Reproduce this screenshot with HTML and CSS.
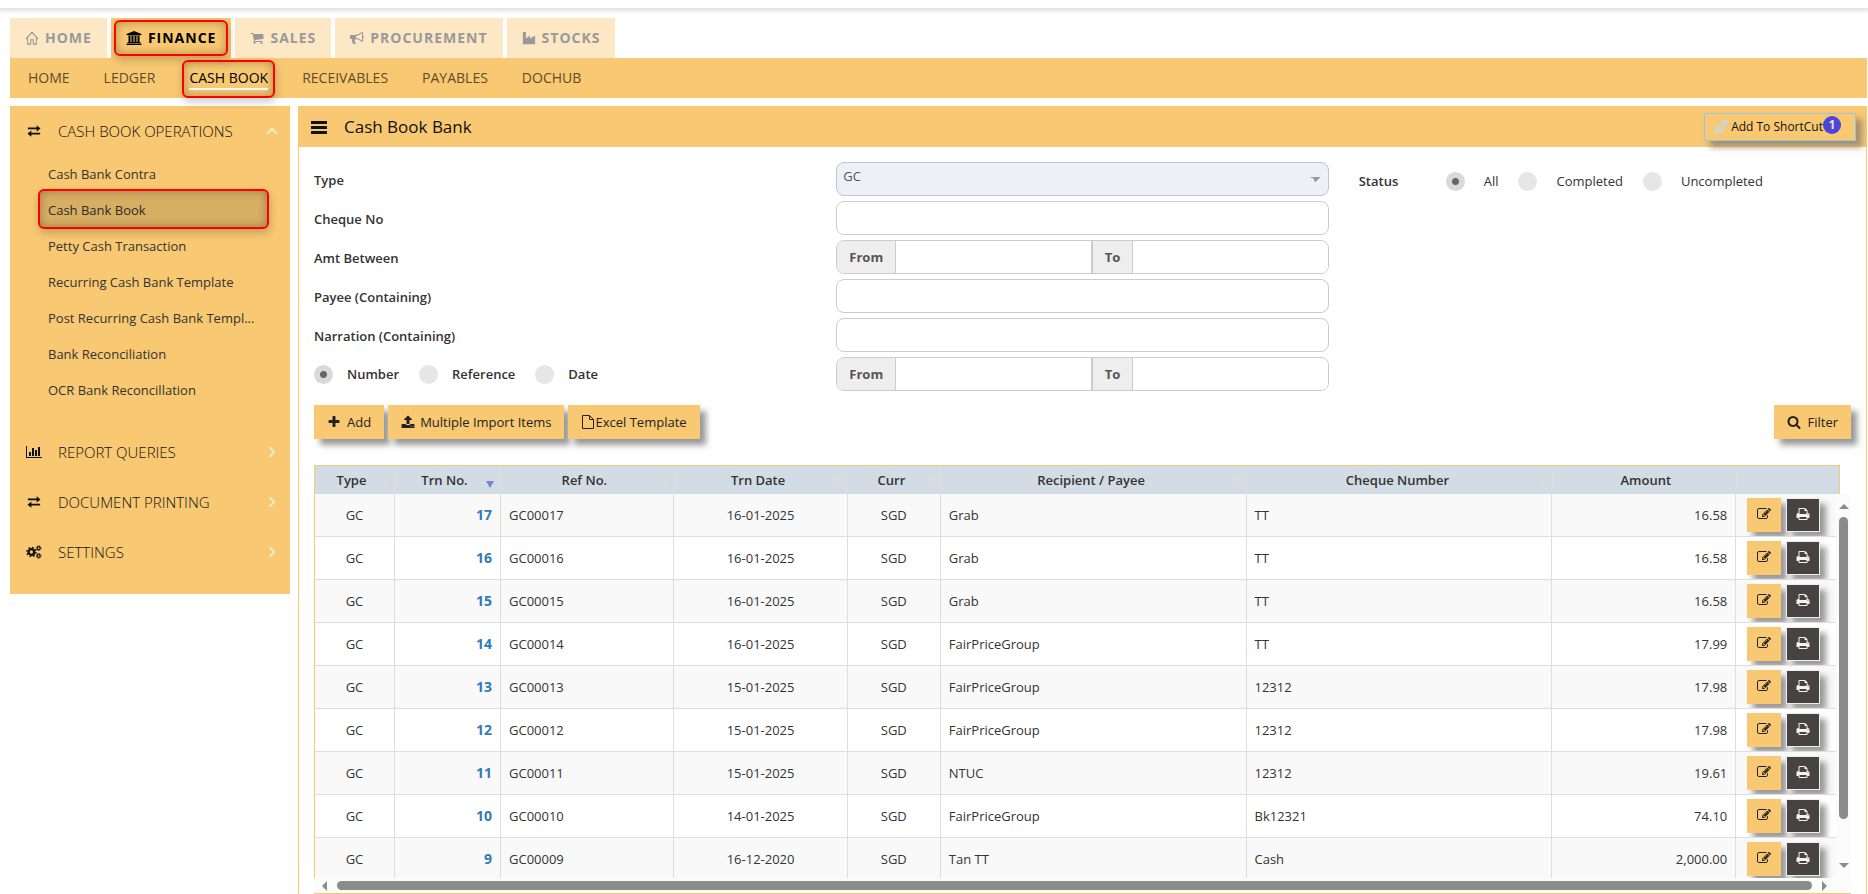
FILE: index.html
```html
<!DOCTYPE html>
<html lang="en">

<head>
    <meta charset="UTF-8">
    <meta name="viewport" content="width=device-width, initial-scale=1.0">
    <title>Cash Book Bank</title>
    <link rel="stylesheet" href="styles.css">
</head>

<body>
    <svg class="sprite" aria-hidden="true">
        <symbol id="i-home" viewBox="0 0 16 16"><path d="M1 9 8 1.500l7 7.500M3 7v8h3.500v-5h3v5H13V7" fill="none" stroke="currentColor" stroke-width="1.200"/></symbol>
        <symbol id="i-bank" viewBox="0 0 1920 1792"><path d="M960 0l960 384v128h-128q0 26-20.500 45t-48.500 19h-1526q-28 0-48.500-19t-20.500-45h-128v-128zm-704 640h256v768h128v-768h256v768h128v-768h256v768h128v-768h256v768h59q28 0 48.500 19t20.500 45v64h-1664v-64q0-26 20.500-45t48.500-19h59zm1595 960q28 0 48.500 19t20.500 45v128h-1920v-128q0-26 20.500-45t48.500-19z"/></symbol>
        <symbol id="i-cart" viewBox="0 0 1792 1792"><path d="M704 1536q0 52-38 90t-90 38-90-38-38-90 38-90 90-38 90 38 38 90zm896 0q0 52-38 90t-90 38-90-38-38-90 38-90 90-38 90 38 38 90zm128-1088v512q0 24-16.500 42.500t-40.500 21.500l-1044 122q13 60 13 70 0 16-24 64h920q26 0 45 19t19 45-19 45-45 19h-1024q-26 0-45-19t-19-45q0-11 8-31.500t16-36 21.500-40 15.500-29.500l-177-823h-204q-26 0-45-19t-19-45 19-45 45-19h256q16 0 28.500 6.500t19.500 15.500 13 24.500 8 26 5.500 29.500 4.500 26h1201q26 0 45 19t19 45z"/></symbol>
        <symbol id="i-horn" viewBox="0 0 1792 1792"><path d="M1664 640q53 0 90.500 37.500t37.500 90.500-37.500 90.500-90.500 37.500v384q0 52-38 90t-90 38q-417-347-812-380-58 19-91 66t-31 100.500 40 92.500q-20 33-23 65.500t6 58 33.500 55 48 50 61.500 50.500q-29 58-111.500 83t-168.500 11.500-132-55.500q-7-23-29.500-87.500t-32-94.500-23-89-15-101 3.500-98.500 22-110.500h-122q-66 0-113-47t-47-113v-192q0-66 47-113t113-47h480q435 0 896-384 52 0 90 38t38 90v384zm-128 604v-954q-394 302-768 343v270q377 42 768 341z"/></symbol>
        <symbol id="i-industry" viewBox="0 0 16 16"><path d="M1 1h3.500v7.500L9 5v3.500L15 5v10H1z"/></symbol>
        <symbol id="i-exchange" viewBox="0 0 16 16"><path d="M1 4h10V1.500L15.500 5 11 8.500V6H1zM15 10H5V7.500L.5 11 5 14.500V12h10z"/></symbol>
        <symbol id="i-chart" viewBox="0 0 2048 1792"><path d="M640 896v512h-256v-512zm384-512v1024h-256v-1024zm1024 1152v128h-2048v-1536h128v1408zm-640-896v768h-256v-768zm384-384v1152h-256v-1152z"/></symbol>
        <symbol id="i-cogs" viewBox="0 0 18 16"><g fill="none" stroke="currentColor"><circle cx="6" cy="8" r="3.200" stroke-width="2.600"/><circle cx="6" cy="8" r="5.200" stroke-width="1.600" stroke-dasharray="2.040"/><circle cx="14.300" cy="3.600" r="1.700" stroke-width="1.400"/><circle cx="14.300" cy="3.600" r="2.800" stroke-width="1" stroke-dasharray="1.100"/><circle cx="14.300" cy="12.400" r="1.700" stroke-width="1.400"/><circle cx="14.300" cy="12.400" r="2.800" stroke-width="1" stroke-dasharray="1.100"/></g></symbol>
        <symbol id="i-chevron" viewBox="0 0 16 16"><path d="M5 2.500 10.500 8 5 13.500" fill="none" stroke="currentColor" stroke-width="2"/></symbol>
        <symbol id="i-bars" viewBox="0 0 16 14"><path d="M0 1h16v3H0zm0 5h16v3H0zm0 5h16v3H0z"/></symbol>
        <symbol id="i-rocket" viewBox="0 0 16 16"><path d="M15 1c-4 0-7 2-9 5.500L3 7 1.500 9.500 4 9.500 6.500 12v2.500L9 13l.500-3C13 8 15 5 15 1zM1.500 14.500l3-3M1 12l1.500-1.500M4 15l1.500-1.500" fill="none" stroke="currentColor" stroke-width="1.800"/><circle cx="11" cy="5" r="1.500" fill="none" stroke="currentColor"/></symbol>
        <symbol id="i-plus" viewBox="0 0 1792 1792"><path d="M1600 736v192q0 40-28 68t-68 28h-416v416q0 40-28 68t-68 28h-192q-40 0-68-28t-28-68v-416h-416q-40 0-68-28t-28-68v-192q0-40 28-68t68-28h416v-416q0-40 28-68t68-28h192q40 0 68 28t28 68v416h416q40 0 68 28t28 68z"/></symbol>
        <symbol id="i-upload" viewBox="0 0 1792 1792"><path d="M1344 1472q0-26-19-45t-45-19-45 19-19 45 19 45 45 19 45-19 19-45zm256 0q0-26-19-45t-45-19-45 19-19 45 19 45 45 19 45-19 19-45zm128-224v320q0 40-28 68t-68 28h-1472q-40 0-68-28t-28-68v-320q0-40 28-68t68-28h427q21 56 70.500 92t110.500 36h256q61 0 110.500-36t70.500-92h427q40 0 68 28t28 68zm-325-648q-17 40-59 40h-256v448q0 26-19 45t-45 19h-256q-26 0-45-19t-19-45v-448h-256q-42 0-59-40-17-39 14-69l448-448q18-19 45-19t45 19l448 448q31 30 14 69z"/></symbol>
        <symbol id="i-file" viewBox="0 0 12 14"><path d="M.5.5h7l4 4v9H.500zM7.500.5v4h4" fill="none" stroke="currentColor"/></symbol>
        <symbol id="i-search" viewBox="0 0 1792 1792"><path d="M1216 832q0-185-131.500-316.500t-316.500-131.500-316.500 131.500-131.500 316.500 131.500 316.500 316.500 131.500 316.500-131.500 131.500-316.500zm512 832q0 52-38 90t-90 38q-54 0-90-38l-343-342q-179 124-399 124-143 0-273.500-55.500t-225-150-150-225-55.500-273.500 55.500-273.500 150-225 225-150 273.500-55.500 273.500 55.500 225 150 150 225 55.500 273.500q0 220-124 399l343 343q37 37 37 90z"/></symbol>
        <symbol id="i-edit" viewBox="0 0 1792 1792"><path d="M888 1184l116-116-152-152-116 116v56h96v96h56zm440-720q-16-16-33 1l-350 350q-17 17-1 33t33-1l350-350q17-17 1-33zm80 594v190q0 119-84.500 203.500t-203.500 84.500h-832q-119 0-203.500-84.500t-84.500-203.500v-832q0-119 84.500-203.500t203.500-84.500h832q63 0 117 25 15 7 18 23 3 17-9 29l-49 49q-14 14-32 8-23-6-45-6h-832q-66 0-113 47t-47 113v832q0 66 47 113t113 47h832q66 0 113-47t47-113v-126q0-13 9-22l64-64q15-15 35-7t20 29zm-96-738l288 288-672 672h-288v-288zm444 132l-92 92-288-288 92-92q28-28 68-28t68 28l152 152q28 28 28 68t-28 68z"/></symbol>
        <symbol id="i-print" viewBox="0 0 1792 1792"><path d="M448 1536h896v-256h-896v256zm0-640h896v-384h-160q-40 0-68-28t-28-68v-160h-640v640zm1152 64q0-26-19-45t-45-19-45 19-19 45 19 45 45 19 45-19 19-45zm128 0v416q0 13-9.500 22.500t-22.500 9.500h-224v160q0 40-28 68t-68 28h-960q-40 0-68-28t-28-68v-160h-224q-13 0-22.500-9.500t-9.500-22.500v-416q0-79 56.500-135.500t135.500-56.500h64v-544q0-40 28-68t68-28h672q40 0 88 20t76 48l152 152q28 28 48 76t20 88v256h64q79 0 135.500 56.500t56.500 135.500z"/></symbol>
        <symbol id="i-sort" viewBox="0 0 8 14"><path d="M4 0l3.500 6h-7zM4 14l3.500-6h-7z"/></symbol>
        <symbol id="i-down" viewBox="0 0 8 8"><path d="M0 1h8L4 8z"/></symbol>
    </svg>

    <div class="top-line"></div>

    <nav class="tabs">
        <a href="#" class="tab"><svg class="icon"><use href="#i-home"/></svg>HOME</a>
        <a href="#" class="tab active"><svg class="icon"><use href="#i-bank"/></svg>FINANCE</a>
        <a href="#" class="tab"><svg class="icon"><use href="#i-cart"/></svg>SALES</a>
        <a href="#" class="tab"><svg class="icon"><use href="#i-horn"/></svg>PROCUREMENT</a>
        <a href="#" class="tab"><svg class="icon"><use href="#i-industry"/></svg>STOCKS</a>
    </nav>

    <nav class="subnav">
        <a href="#">HOME</a>
        <a href="#">LEDGER</a>
        <a href="#" class="active"><span>CASH BOOK</span></a>
        <a href="#">RECEIVABLES</a>
        <a href="#">PAYABLES</a>
        <a href="#">DOCHUB</a>
    </nav>

    <div class="layout">
        <aside class="sidebar">
            <a href="#" class="group"><svg class="icon"><use href="#i-exchange"/></svg><span>CASH BOOK OPERATIONS</span><svg class="icon chevron open"><use href="#i-chevron"/></svg></a>
            <ul class="items">
                <li><a href="#">Cash Bank Contra</a></li>
                <li class="selected"><a href="#">Cash Bank Book</a></li>
                <li><a href="#">Petty Cash Transaction</a></li>
                <li><a href="#">Recurring Cash Bank Template</a></li>
                <li><a href="#">Post Recurring Cash Bank Templ...</a></li>
                <li><a href="#">Bank Reconciliation</a></li>
                <li><a href="#">OCR Bank Reconcillation</a></li>
            </ul>
            <a href="#" class="group"><svg class="icon"><use href="#i-chart"/></svg><span>REPORT QUERIES</span><svg class="icon chevron"><use href="#i-chevron"/></svg></a>
            <a href="#" class="group"><svg class="icon"><use href="#i-exchange"/></svg><span>DOCUMENT PRINTING</span><svg class="icon chevron"><use href="#i-chevron"/></svg></a>
            <a href="#" class="group"><svg class="icon"><use href="#i-cogs"/></svg><span>SETTINGS</span><svg class="icon chevron"><use href="#i-chevron"/></svg></a>
        </aside>

        <main class="panel">
            <header class="panel-head">
                <svg class="icon menu"><use href="#i-bars"/></svg>
                <h1>Cash Book Bank</h1>
                <button type="button" class="shortcut"><svg class="icon"><use href="#i-rocket"/></svg>Add To ShortCut<span class="badge">1</span></button>
            </header>

            <form class="filters">
                <div class="fields">
                    <label for="type">Type</label>
                    <select id="type" class="field"><option>GC</option></select>

                    <label for="cheque">Cheque No</label>
                    <input type="text" id="cheque" class="field">

                    <span class="label">Amt Between</span>
                    <div class="range">
                        <label for="amt-from">From</label><input type="text" id="amt-from">
                        <label for="amt-to">To</label><input type="text" id="amt-to">
                    </div>

                    <label for="payee">Payee (Containing)</label>
                    <input type="text" id="payee" class="field">

                    <label for="narration">Narration (Containing)</label>
                    <input type="text" id="narration" class="field">

                    <div class="radios">
                        <label><input type="radio" name="by" checked>Number</label>
                        <label><input type="radio" name="by">Reference</label>
                        <label><input type="radio" name="by">Date</label>
                    </div>
                    <div class="range">
                        <label for="by-from">From</label><input type="text" id="by-from">
                        <label for="by-to">To</label><input type="text" id="by-to">
                    </div>
                </div>
                <div class="status">
                    <span class="label">Status</span>
                    <div class="radios wide">
                        <label><input type="radio" name="status" checked>All</label>
                        <label><input type="radio" name="status">Completed</label>
                        <label><input type="radio" name="status">Uncompleted</label>
                    </div>
                </div>
            </form>

            <div class="toolbar">
                <button type="button" class="btn spaced"><svg class="icon"><use href="#i-plus"/></svg>Add</button>
                <button type="button" class="btn"><svg class="icon"><use href="#i-upload"/></svg>Multiple Import Items</button>
                <button type="button" class="btn tight"><svg class="icon"><use href="#i-file"/></svg>Excel Template</button>
                <button type="button" class="btn spaced filter"><svg class="icon"><use href="#i-search"/></svg>Filter</button>
            </div>

            <div class="grid">
                <table class="grid-head">
                    <colgroup>
                        <col class="c-type"><col class="c-trn"><col class="c-ref"><col class="c-date"><col class="c-curr"><col class="c-payee"><col class="c-cheque"><col class="c-amount"><col class="c-action">
                    </colgroup>
                    <thead>
                        <tr>
                            <th class="sort">Type<svg><use href="#i-sort"/></svg></th>
                            <th class="sort sorted">Trn No.<svg><use href="#i-down"/></svg></th>
                            <th class="sort">Ref No.<svg><use href="#i-sort"/></svg></th>
                            <th class="sort">Trn Date<svg><use href="#i-sort"/></svg></th>
                            <th class="sort">Curr<svg><use href="#i-sort"/></svg></th>
                            <th class="sort">Recipient / Payee<svg><use href="#i-sort"/></svg></th>
                            <th class="sort">Cheque Number<svg><use href="#i-sort"/></svg></th>
                            <th>Amount</th>
                            <th></th>
                        </tr>
                    </thead>
                </table>
                <div class="grid-view">
                    <div class="grid-scroll">
                        <table class="grid-body">
                            <colgroup>
                                <col class="c-type"><col class="c-trn"><col class="c-ref"><col class="c-date"><col class="c-curr"><col class="c-payee"><col class="c-cheque"><col class="c-amount"><col class="c-action">
                            </colgroup>
                            <tbody id="rows"></tbody>
                        </table>
                    </div>
                    <div class="bar-y"><i class="arrow up"></i><i class="thumb"></i><i class="arrow down"></i></div>
                </div>
                <div class="bar-x"><i class="arrow left"></i><i class="thumb"></i><i class="arrow right"></i></div>
            </div>
        </main>
    </div>

    <script>
        const rows = [
            [17, '16-01-2025', 'Grab', 'TT', '16.58'],
            [16, '16-01-2025', 'Grab', 'TT', '16.58'],
            [15, '16-01-2025', 'Grab', 'TT', '16.58'],
            [14, '16-01-2025', 'FairPriceGroup', 'TT', '17.99'],
            [13, '15-01-2025', 'FairPriceGroup', '12312', '17.98'],
            [12, '15-01-2025', 'FairPriceGroup', '12312', '17.98'],
            [11, '15-01-2025', 'NTUC', '12312', '19.61'],
            [10, '14-01-2025', 'FairPriceGroup', 'Bk12321', '74.10'],
            [9, '16-12-2020', 'Tan TT', 'Cash', '2,000.00']
        ];

        document.getElementById('rows').innerHTML = rows.map(([no, date, payee, cheque, amount]) => `
            <tr>
                <td class="center">GC</td>
                <td class="right"><a href="#">${no}</a></td>
                <td>GC${String(no).padStart(5, '0')}</td>
                <td class="center">${date}</td>
                <td class="center">SGD</td>
                <td>${payee}</td>
                <td>${cheque}</td>
                <td class="right">${amount}</td>
                <td class="action"><div class="actions">
                    <button type="button" class="act edit" aria-label="Edit"><svg class="icon"><use href="#i-edit"/></svg></button>
                    <button type="button" class="act print" aria-label="Print"><svg class="icon"><use href="#i-print"/></svg></button>
                </div></td>
            </tr>`).join('');
    </script>
</body>

</html>
```
FILE: styles.css
```css
* {
    box-sizing: border-box;
}

body {
    margin: 0;
    height: 100vh;
    overflow: hidden;
    display: flex;
    flex-direction: column;
    font-family: "Segoe UI", "Open Sans", "Noto Sans", sans-serif;
    font-size: 13px;
    line-height: 20px;
    color: #333;
    background: #fff;
}

a {
    color: inherit;
    text-decoration: none;
}

button,
input,
select {
    font: inherit;
    color: inherit;
}

.sprite {
    position: absolute;
    width: 0;
    height: 0;
}

.icon {
    width: 14px;
    height: 14px;
    flex: none;
    fill: currentColor;
}

.top-line {
    height: 6px;
    margin: 8px 0 4px;
    flex: none;
    background: linear-gradient(#e3e3e3, #fff);
}

/* top navigation */
.tabs {
    display: flex;
    flex: none;
    gap: 4px;
    height: 40px;
    padding-left: 10px;
}

.tab {
    position: relative;
    display: flex;
    align-items: center;
    gap: 6px;
    padding: 0 15px;
    background: #fce8c5;
    color: #999;
    font-size: 14px;
    font-weight: 700;
    letter-spacing: 1px;
}

.tab.active {
    background: #f8c872;
    color: #000;
}

.tab.active .icon {
    width: 16px;
}

.subnav {
    display: flex;
    flex: none;
    height: 40px;
    margin: 0 1px 8px 10px;
    padding-left: 1px;
    background: #f8c872;
    font-size: 14px;
    font-weight: 500;
    color: #5f4c2b;
}

.subnav a {
    position: relative;
    padding: 10px 17px;
}

.subnav .active {
    color: #000;
}

.subnav span {
    display: block;
    border-bottom: 2px solid #fff;
}

/* red frames round the current entries */
.tab.active::after,
.subnav .active::after,
.selected::after {
    content: "";
    position: absolute;
    z-index: 2;
    inset: 2px 3px;
    border: 2px solid #f00;
    border-radius: 6px;
    box-shadow: inset 0 0 10px rgba(0, 0, 0, 0.3), 1px 4px 8px rgba(0, 0, 0, 0.2);
    pointer-events: none;
}

.subnav .active::after {
    inset: 2px 10px 0;
}

.selected::after {
    inset: -3px 21px -1px 28px;
    background: rgba(0, 0, 0, 0.13);
}

.layout {
    flex: 1;
    min-height: 0;
    display: flex;
    gap: 8px;
    padding: 0 1px 0 10px;
}

/* sidebar */
.sidebar {
    width: 280px;
    flex: none;
    align-self: flex-start;
    padding-bottom: 17px;
    background: #f8c872;
}

.group {
    display: flex;
    align-items: center;
    gap: 16px;
    height: 50px;
    padding: 0 10px 0 16px;
    font-size: 15px;
    font-weight: 300;
    color: #111;
}

.group .icon {
    width: 16px;
}

.group .chevron {
    margin-left: auto;
    color: #fdeed4;
}

.group .open {
    transform: rotate(-90deg);
}

.items {
    list-style: none;
    margin: 0 0 19px;
    padding: 0;
}

.items li {
    position: relative;
}

.items a {
    display: block;
    padding: 8px 0 8px 38px;
}

/* main panel */
.panel {
    flex: 1;
    min-width: 0;
    display: flex;
    flex-direction: column;
    border: solid #f8c872;
    border-width: 0 1px;
}

.panel-head {
    display: flex;
    align-items: center;
    flex: none;
    height: 41px;
    padding: 0 10px 0 12px;
    background: #f8c872;
    color: #111;
}

.panel-head .menu {
    width: 16px;
}

h1 {
    margin: 0 auto 0 17px;
    font-size: 17px;
    font-weight: 400;
}

.shortcut {
    position: relative;
    display: flex;
    align-items: center;
    gap: 3px;
    height: 28px;
    padding: 0 32px 0 9px;
    border: 1px solid #8fc8e8;
    background: #f8c872;
    box-shadow: 6px 6px 6px #a2906e;
    font-size: 12px;
}

.shortcut .icon {
    color: #c3d9e4;
}

.badge {
    position: absolute;
    top: 2px;
    right: 14px;
    width: 18px;
    height: 18px;
    border-radius: 50%;
    background: #4a45dc;
    color: #f6dfb5;
    font-weight: 700;
    line-height: 18px;
}

/* filter form */
.filters {
    display: flex;
    flex: none;
    padding-top: 15px;
    font-weight: 600;
}

.fields {
    display: grid;
    grid-template-columns: 1fr 1fr;
    gap: 5px 30px;
    align-items: center;
    width: 66.666%;
    padding: 0 15px;
}

.fields > label,
.fields > .label {
    padding-top: 2px;
}

.field,
.range {
    width: 100%;
    height: 34px;
    border: 1px solid #ccc;
    border-radius: 8px;
    background: #fff;
}

select.field {
    appearance: none;
    padding: 0 6px 6px;
    border-color: #bcc6db;
    background-color: #edf0f6;
    background-image: linear-gradient(to bottom left, #999 50%, transparent 50%), linear-gradient(to bottom right, #999 50%, transparent 50%);
    background-size: 5px 5px;
    background-position: right 12px top 14px, right 7px top 14px;
    background-repeat: no-repeat;
    color: #555;
    font-weight: 400;
}

.range {
    display: flex;
    overflow: hidden;
    line-height: 32px;
}

.range label {
    flex: none;
    padding: 0 12px;
    border-right: 1px solid #ccc;
    background: #eee;
    color: #555;
    font-weight: 700;
}

.range input {
    flex: 1;
    min-width: 0;
    border: 0;
}

.range input + label {
    border-left: 2px solid #ccc;
}

.radios {
    display: flex;
    gap: 20px;
}

.radios label {
    display: flex;
    align-items: center;
    gap: 14px;
}

.radios.wide {
    font-weight: 400;
}

.radios.wide label {
    gap: 19px;
}

.radios input {
    appearance: none;
    width: 19px;
    height: 19px;
    margin: 0;
    border-radius: 50%;
    background: #e6e6e6;
}

.radios input:checked {
    background: radial-gradient(circle, #666 3px, #d9d9d9 4px);
}

.status {
    display: flex;
    align-items: flex-start;
    padding: 9px 15px;
}

.status .label {
    width: 87px;
}

/* buttons */
.toolbar {
    display: flex;
    flex: none;
    gap: 4px;
    padding: 14px 15px 26px;
}

.btn {
    display: flex;
    align-items: center;
    gap: 5px;
    height: 34px;
    padding: 0 13px;
    border: 0;
    background: #f8c872;
    box-shadow: 6px 6px 6px #999;
    color: #222;
}

.btn.spaced {
    gap: 6px;
}

.btn.tight {
    gap: 0;
}

.btn.filter {
    margin-left: auto;
}

/* table */
.grid {
    flex: 1;
    min-height: 0;
    display: flex;
    flex-direction: column;
    margin: 0 15px;
    border-bottom: 1px solid #f8c872;
}

table {
    table-layout: fixed;
    border-collapse: separate;
    border-spacing: 0;
    width: 100%;
}

.c-type { width: 80px; }
.c-trn { width: 106px; }
.c-ref, .c-date { width: 11.4%; }
.c-curr { width: 93px; }
.c-payee, .c-cheque { width: 20.1%; }
.c-amount { width: 12.1%; }
.c-action { width: auto; }

.grid-head {
    flex: none;
    width: calc(100% - 11px);
    border: 1px solid #f8c872;
    border-bottom: 0;
    background: #d1dce4;
}

th {
    position: relative;
    height: 28px;
    padding: 0;
    border-right: 1px solid #dbdfe2;
    font-weight: 600;
}

th:last-child {
    border-right: 0;
}

th.sort {
    padding-right: 6px;
}

th svg {
    position: absolute;
    right: 6px;
    top: 8px;
    width: 7px;
    height: 14px;
    fill: #dcdcdc;
}

th.sorted svg {
    top: 11px;
    width: 8px;
    fill: #7b80dc;
}

.grid-view {
    flex: 1;
    min-height: 0;
    display: flex;
    border-left: 1px solid #f8c872;
}

.grid-scroll {
    flex: 1;
    min-width: 0;
    overflow: hidden;
}

td {
    height: 43px;
    padding: 0 8px;
    border-right: 1px solid #ddd;
    border-bottom: 1px solid #ddd;
}

tr:nth-child(odd) td {
    background: #f9f9f9;
}

td a {
    color: #337ab7;
    font-size: 14px;
    font-weight: 700;
}

.center {
    text-align: center;
}

.right {
    text-align: right;
}

.action {
    padding: 0;
    border-right: 0;
}

.actions {
    display: flex;
    gap: 5px;
    height: 42px;
    padding: 4px 0 4px 11px;
    overflow: hidden;
}

.act {
    width: 34px;
    height: 34px;
    padding: 0;
    border: 0;
    background: #f8c872;
    box-shadow: 6px 6px 6px #999;
    color: #222;
}

.act.print {
    border: 1px solid #eee;
    background: #484343;
    color: #f3f3f3;
}

.act .icon {
    display: block;
    margin: 0 auto 2px;
}

/* scrollbars */
.bar-y {
    display: flex;
    flex-direction: column;
    align-items: center;
    width: 15px;
    padding: 10px 0;
    background: #fcfcfc;
}

.bar-y .thumb {
    width: 9px;
    height: 83%;
    margin: 8px 0 auto;
}

.bar-x {
    display: flex;
    flex: none;
    align-items: center;
    height: 15px;
    padding: 0 24px 0 8px;
    background: #fcfcfc;
}

.bar-x .thumb {
    flex: 1;
    height: 9px;
    margin: 0 10px;
}

.thumb {
    border-radius: 5px;
    background: #8b8b8b;
}

.arrow {
    border: 5px solid transparent;
}

.up {
    border-top: 0;
    border-bottom-color: #8b8b8b;
}

.down {
    border-bottom: 0;
    border-top-color: #8b8b8b;
}

.left {
    border-left: 0;
    border-right-color: #8b8b8b;
}

.right.arrow {
    border-right: 0;
    border-left-color: #8b8b8b;
}
```
